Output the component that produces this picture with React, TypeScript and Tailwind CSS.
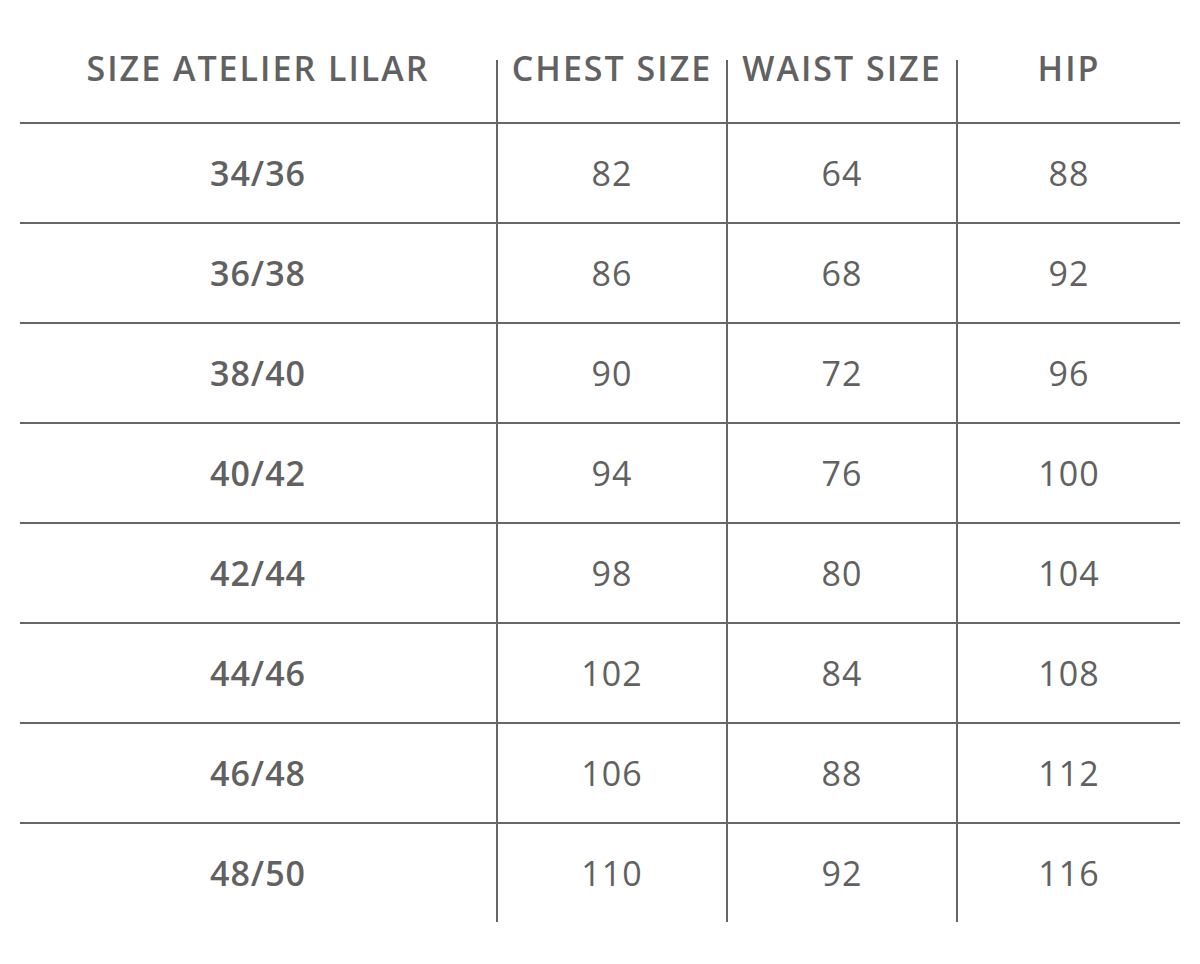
const headers = ['SIZE ATELIER LILAR', 'CHEST SIZE', 'WAIST SIZE', 'HIP'];

const rows: [string, number, number, number][] = [
  ['34/36', 82, 64, 88],
  ['36/38', 86, 68, 92],
  ['38/40', 90, 72, 96],
  ['40/42', 94, 76, 100],
  ['42/44', 98, 80, 104],
  ['44/46', 102, 84, 108],
  ['46/48', 106, 88, 112],
  ['48/50', 110, 92, 116],
];

const cols = 'grid w-[1160px] grid-cols-[476px_230px_230px_224px]';

export default function App() {
  return (
    <div
      className="min-h-[964px] bg-white pt-[60px] pl-[20px] text-[#616161]"
      style={{ fontFamily: '"Open Sans", "Noto Sans", sans-serif' }}
    >
      {/* header */}
      <div className={`${cols} h-[62px]`}>
        {headers.map((h, i) => (
          <div
            key={h}
            className={`flex justify-center ${i > 0 ? 'border-l-2 border-[#666]' : ''}`}
          >
            <span className="-mt-[9px] text-[34px] font-semibold leading-none tracking-[2px] whitespace-nowrap">
              {h}
            </span>
          </div>
        ))}
      </div>

      {/* body */}
      {rows.map(([size, chest, waist, hip]) => (
        <div key={size} className={`${cols} h-[100px] border-t-2 border-[#666]`}>
          <div className="flex items-center justify-center text-[34px] font-semibold leading-none tracking-[1px]">
            {size}
          </div>
          {[chest, waist, hip].map((v, i) => (
            <div
              key={i}
              className="flex items-center justify-center border-l-2 border-[#666] text-[34px] leading-none tracking-[1px]"
            >
              {v}
            </div>
          ))}
        </div>
      ))}
    </div>
  );
}
